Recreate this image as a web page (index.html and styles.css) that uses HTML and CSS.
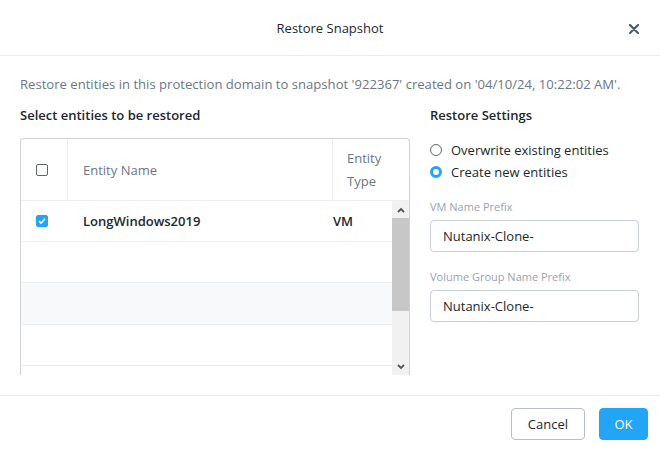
FILE: index.html
```html
<!DOCTYPE html>
<html lang="en">
<head>
    <meta charset="UTF-8">
    <title>Restore Snapshot</title>
    <link rel="stylesheet" href="styles.css">
</head>
<body>
    <div class="modal">
        <div class="modal-head">
            <span class="modal-title">Restore Snapshot</span>
            <button class="close" aria-label="Close">
                <svg width="10" height="10" viewBox="0 0 10 10"><path d="M1 1 L9 9 M9 1 L1 9" stroke="#4b5b6b" stroke-width="2.2" stroke-linecap="round"/></svg>
            </button>
        </div>
        <div class="modal-body">
            <p class="desc">Restore entities in this protection domain to snapshot '922367' created on '04/10/24, 10:22:02 AM'.</p>
            <div class="cols">
                <div class="col-left">
                    <h3>Select entities to be restored</h3>
                    <div class="table">
                        <div class="thead">
                            <div class="c-check"><span class="cb"></span></div>
                            <div class="c-name">Entity Name</div>
                            <div class="c-type">Entity<br>Type</div>
                        </div>
                        <div class="tbody">
                            <div class="rows">
                                <div class="row">
                                    <div class="c-check"><span class="cb on"><svg width="8" height="8" viewBox="0 0 8 8"><path d="M1 4.2 L3.1 6.2 L7 1.8" fill="none" stroke="#fff" stroke-width="1.6"/></svg></span></div>
                                    <div class="c-name strong">LongWindows2019</div>
                                    <div class="c-type strong">VM</div>
                                </div>
                                <div class="row"></div>
                                <div class="row alt"></div>
                                <div class="row"></div>
                                <div class="row"></div>
                            </div>
                            <div class="scroll">
                                <div class="sbtn"><svg width="8" height="6" viewBox="0 0 8 6"><path d="M1 5 L4 2 L7 5" fill="none" stroke="#555" stroke-width="1.8"/></svg></div>
                                <div class="thumb"></div>
                                <div class="track"></div>
                                <div class="sbtn"><svg width="8" height="6" viewBox="0 0 8 6"><path d="M1 1 L4 4 L7 1" fill="none" stroke="#555" stroke-width="1.8"/></svg></div>
                            </div>
                        </div>
                    </div>
                </div>
                <div class="col-right">
                    <h3>Restore Settings</h3>
                    <div class="radios">
                        <label class="radio"><span class="dot"></span>Overwrite existing entities</label>
                        <label class="radio"><span class="dot on"></span>Create new entities</label>
                    </div>
                    <div class="field">
                        <div class="lbl">VM Name Prefix</div>
                        <div class="input">Nutanix-Clone-</div>
                    </div>
                    <div class="field">
                        <div class="lbl">Volume Group Name Prefix</div>
                        <div class="input">Nutanix-Clone-</div>
                    </div>
                </div>
            </div>
        </div>
        <div class="modal-foot">
            <button class="btn">Cancel</button>
            <button class="btn primary">OK</button>
        </div>
    </div>
</body>
</html>
```

FILE: styles.css
```css
*{
    margin: 0;
    padding: 0;
    box-sizing: border-box;
}
body{
    width: 660px;
    height: 453px;
    background: #fff;
    font-family: "Open Sans", "Liberation Sans", Arial, sans-serif;
    font-size: 13px;
    color: #22272e;
    overflow: hidden;
}
.modal{
    width: 660px;
    height: 453px;
    display: flex;
    flex-direction: column;
}
.modal-head{
    height: 56px;
    border-bottom: 1px solid #e9ecef;
    display: flex;
    align-items: center;
    justify-content: center;
    position: relative;
}
.modal-title{
    font-size: 13px;
    color: #22272e;
}
.close{
    position: absolute;
    right: 21px;
    top: 24px;
    border: 0;
    background: none;
    width: 10px;
    height: 10px;
    display: flex;
}
.modal-body{
    flex: 1;
    padding: 20px 20px 0;
    overflow: hidden;
}
.desc{
    color: #6b7785;
    line-height: 16px;
    font-size: 13.1px;
}
.cols{
    display: flex;
    gap: 20px;
    margin-top: 15px;
}
.col-left{
    width: 390px;
}
.col-right{
    width: 210px;
}
h3{
    font-size: 13px;
    font-weight: 600;
    line-height: 16px;
    color: #22272e;
}
.table{
    margin-top: 15px;
    height: 237px;
    border: 1px solid #d0d4d8;
    border-bottom: 0;
    border-radius: 4px 4px 0 0;
    overflow: hidden;
}
.thead{
    display: flex;
    height: 62px;
    border-bottom: 1px solid #eceef0;
    color: #6b7785;
}
.thead > div{
    display: flex;
    align-items: center;
    border-right: 1px solid #eceef0;
}
.thead > div:last-child{
    border-right: 0;
}
.thead .c-type{
    line-height: 23px;
}
.c-check{
    width: 47px;
    padding-left: 15px;
}
.c-name{
    width: 265px;
    padding-left: 15px;
}
.c-type{
    flex: 1;
    padding-left: 14px;
}
.cb{
    width: 12px;
    height: 12px;
    border: 1px solid #5d6670;
    border-radius: 2px;
    display: flex;
    align-items: center;
    justify-content: center;
}
.cb.on{
    background: #22a5f7;
    border-color: #22a5f7;
}
.tbody{
    display: flex;
    height: 174px;
}
.rows{
    flex: 1;
}
.row{
    height: 41px;
    border-bottom: 1px solid #eceef0;
    display: flex;
    align-items: center;
}
.row.alt{
    background: #f8f9fa;
    height: 42px;
}
.strong{
    font-weight: 600;
    color: #22272e;
}
.row .c-name{
    width: 265px;
}
.row .c-type{
    padding-left: 0;
}
.scroll{
    width: 17px;
    display: flex;
    flex-direction: column;
    background: #f1f1f1;
}
.sbtn{
    height: 17px;
    display: flex;
    align-items: center;
    justify-content: center;
}
.thumb{
    height: 93px;
    background: #c7c7c7;
}
.track{
    flex: 1;
}
.radios{
    margin-top: 19px;
    display: flex;
    flex-direction: column;
    gap: 6px;
}
.radio{
    display: flex;
    align-items: center;
    line-height: 16px;
    color: #22272e;
}
.dot{
    width: 12px;
    height: 12px;
    border: 1px solid #5d6670;
    border-radius: 50%;
    margin-right: 9px;
}
.dot.on{
    border: 3px solid #22a5f7;
    background: #fff;
}
.field{
    margin-top: 20px;
}
.field + .field{
    margin-top: 18px;
}
.lbl{
    font-size: 11px;
    color: #9aa3ad;
    line-height: 14px;
    margin-bottom: 6px;
}
.input{
    width: 209px;
    height: 32px;
    border: 1px solid #c9ced3;
    border-radius: 4px;
    padding-left: 12px;
    display: flex;
    align-items: center;
    color: #22272e;
}
.modal-foot{
    height: 58px;
    border-top: 1px solid #e9ecef;
    display: flex;
    justify-content: flex-end;
    align-items: center;
    gap: 14px;
    padding-right: 12px;
    padding-bottom: 2px;
}
.btn{
    height: 32px;
    padding: 0 16px;
    border: 1px solid #b8bec4;
    border-radius: 4px;
    background: #fff;
    font-family: inherit;
    font-size: 13px;
    color: #22272e;
}
.btn.primary{
    background: #22a5f7;
    border-color: #22a5f7;
    color: #fff;
    width: 49px;
    padding: 0;
}
```
